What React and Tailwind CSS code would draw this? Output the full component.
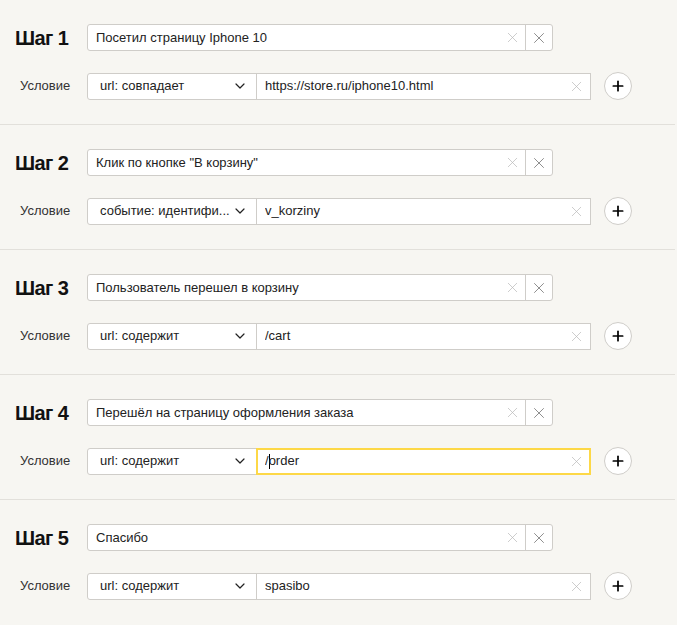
import { ChevronDown, Plus, X } from "lucide-react";

const steps = [
  { n: 1, name: "Посетил страницу Iphone 10", cond: "url: совпадает", value: "https://store.ru/iphone10.html" },
  { n: 2, name: 'Клик по кнопке "В корзину"', cond: "событие: идентифи...", value: "v_korziny" },
  { n: 3, name: "Пользователь перешел в корзину", cond: "url: содержит", value: "/cart" },
  { n: 4, name: "Перешёл на страницу оформления заказа", cond: "url: содержит", value: "/order", focused: true },
  { n: 5, name: "Спасибо", cond: "url: содержит", value: "spasibo" },
];

const Step = ({ step, last }) => (
  <section className={last ? "pt-6 pb-6" : "border-b border-[#e2e0db] pt-6 pb-6"}>
    <div className="flex items-center pl-[15px]">
      <h2 className="w-[72px] text-[20px] font-bold leading-none tracking-[-0.6px] text-[#111]">Шаг {step.n}</h2>
      <div className="flex h-[27px] w-[466px] rounded-[3px] border border-[#cfcdc9] bg-white">
        <div className="flex flex-1 items-center border-r border-[#cfcdc9] pl-2 pr-[4px]">
          <span className="flex-1 truncate text-[13px] text-[#222]">{step.name}</span>
          <X className="h-[17px] w-[17px] text-[#b8b8b8]" strokeWidth={1} />
        </div>
        <button className="flex w-[26px] items-center justify-center">
          <X className="h-[18px] w-[18px] text-[#777]" strokeWidth={1.1} />
        </button>
      </div>
    </div>

    <div className="mt-[21px] flex items-center pl-[20px]">
      <span className="w-[67px] text-[13px] text-[#333]">Условие</span>
      <div className="flex h-[27px] w-[170px] items-center rounded-l-[3px] border border-[#cfcdc9] bg-white pl-[12px] pr-[8px]">
        <span className="flex-1 whitespace-nowrap text-[13px] text-[#222]">{step.cond}</span>
        <ChevronDown className="h-4 w-4 shrink-0 text-[#222]" strokeWidth={1.8} />
      </div>
      <div
        className={
          step.focused
            ? "-ml-px flex h-[27px] w-[335px] items-center border-2 border-[#fdd847] bg-white pl-[7px] pr-[4px]"
            : "-ml-px flex h-[27px] w-[335px] items-center border border-[#cfcdc9] bg-white pl-2 pr-[5px]"
        }
      >
        <span className="flex flex-1 items-center truncate text-[13px] text-[#222]">
          {step.focused ? (
            <>
              /<span className="mr-[-1px] inline-block h-[15px] w-px bg-black" />
              order
            </>
          ) : (
            step.value
          )}
        </span>
        <X className="h-[17px] w-[17px] text-[#b8b8b8]" strokeWidth={1} />
      </div>
      <button className="ml-[13px] flex h-[28px] w-[28px] items-center justify-center rounded-full border border-[#cfcdc9] bg-white">
        <Plus className="h-4 w-4 text-black" strokeWidth={2.6} />
      </button>
    </div>
  </section>
);

export default function App() {
  return (
    <div className="min-h-[625px] w-full bg-[#f7f6f2] pr-[2px] font-['Liberation_Sans',Arial,sans-serif]">
      {steps.map((step, i) => (
        <Step key={step.n} step={step} last={i === steps.length - 1} />
      ))}
    </div>
  );
}
